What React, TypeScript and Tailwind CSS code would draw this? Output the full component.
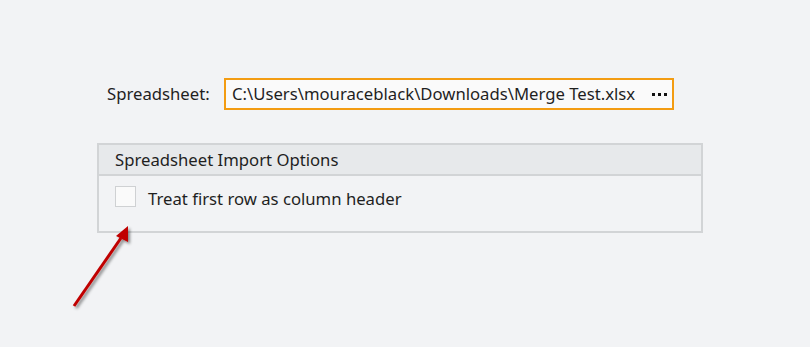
export default function App() {
  return (
    <div className="relative w-[810px] h-[347px] bg-[#f2f3f5] text-[#1f1f1f] font-['Noto_Sans',sans-serif] overflow-hidden">
      <div className="pt-[78px] pl-[97px]">
        {/* file picker row */}
        <div className="flex items-center">
          <span className="w-[127px] pl-[10px] text-[16.7px]">Spreadsheet:</span>
          <div className="w-[450px] h-[32px] flex items-center justify-between border-2 border-[#f39c12] bg-[#fafafa] pl-[6px] pr-[5px]">
            <span className="text-[16.7px] whitespace-nowrap">C:\Users\mouraceblack\Downloads\Merge Test.xlsx</span>
            <span className="flex gap-[3px] mt-[1px]">
              <span className="w-[3px] h-[3px] bg-[#111]" />
              <span className="w-[3px] h-[3px] bg-[#111]" />
              <span className="w-[3px] h-[3px] bg-[#111]" />
            </span>
          </div>
        </div>

        {/* import options group */}
        <div className="mt-[33px] w-[606px] border-2 border-[#d2d4d6]">
          <div className="h-[31px] flex items-center pl-[16px] bg-[#e7e9eb] border-b-2 border-[#d2d4d6] text-[16.7px]">
            Spreadsheet Import Options
          </div>
          <div className="h-[55px] flex items-start pt-[10px] pl-[16px] gap-[12px]">
            <div className="w-[21px] h-[21px] border border-[#cfd1d3] bg-[#fafafa]" />
            <span className="text-[16.7px] leading-[24px] mt-[1px]">Treat first row as column header</span>
          </div>
        </div>
      </div>

      {/* annotation arrow */}
      <svg className="absolute left-0 top-0 pointer-events-none" width="810" height="347">
        <defs>
          <filter id="sh" x="-50%" y="-50%" width="200%" height="200%">
            <feDropShadow dx="2" dy="2" stdDeviation="1.5" floodColor="#000" floodOpacity="0.45" />
          </filter>
        </defs>
        <g filter="url(#sh)">
          <line x1="74" y1="306" x2="121" y2="238" stroke="#c00000" strokeWidth="3" />
          <polygon points="128,226 128,242 116,236" fill="#c00000" />
        </g>
      </svg>
    </div>
  )
}
